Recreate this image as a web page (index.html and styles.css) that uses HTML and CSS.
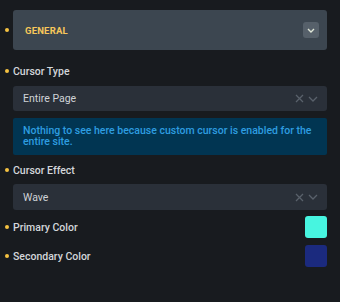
FILE: index.html
```html
<!DOCTYPE html>
<html>
<head>
    <link rel="stylesheet" href="styles.css">
</head>
<body>
    <div class="panel">
        <div class="field">
            <span class="dot"></span>
            <div class="section-head">
                <span class="section-title">General</span>
                <span class="toggle">
                    <svg width="8" height="5" viewBox="0 0 8 5"><path d="M1 1l3 3 3-3" fill="none" stroke="#dfe6d8" stroke-width="1.4"/></svg>
                </span>
            </div>
        </div>

        <div class="field label-row">
            <span class="dot"></span>
            <label>Cursor Type</label>
        </div>
        <div class="select">
            <span>Entire Page</span>
            <span class="select-icons">
                <svg width="9" height="9" viewBox="0 0 9 9"><path d="M1 1l7 7M8 1l-7 7" stroke="#59616b" stroke-width="1.3"/></svg>
                <svg width="10" height="6" viewBox="0 0 10 6"><path d="M1 1l4 4 4-4" fill="none" stroke="#59616b" stroke-width="1.3"/></svg>
            </span>
        </div>
        <div class="notice">Nothing to see here because custom cursor is enabled for the entire site.</div>

        <div class="field label-row after-notice">
            <span class="dot"></span>
            <label>Cursor Effect</label>
        </div>
        <div class="select">
            <span>Wave</span>
            <span class="select-icons">
                <svg width="9" height="9" viewBox="0 0 9 9"><path d="M1 1l7 7M8 1l-7 7" stroke="#59616b" stroke-width="1.3"/></svg>
                <svg width="10" height="6" viewBox="0 0 10 6"><path d="M1 1l4 4 4-4" fill="none" stroke="#59616b" stroke-width="1.3"/></svg>
            </span>
        </div>

        <div class="field color-row">
            <span class="dot"></span>
            <label>Primary Color</label>
            <span class="swatch primary"></span>
        </div>
        <div class="field color-row">
            <span class="dot"></span>
            <label>Secondary Color</label>
            <span class="swatch secondary"></span>
        </div>
    </div>
</body>
</html>
```

FILE: styles.css
```css
body {
    margin: 0;
    background-color: #181b1f;
    font-family: Roboto, "Noto Sans", sans-serif;
    color: #d3d6da;
}

.panel {
    display: flex;
    flex-direction: column;
    padding: 10px 13px 0 13px;
}

.field {
    position: relative;
    display: flex;
    align-items: center;
}

.dot {
    position: absolute;
    left: -8px;
    top: 50%;
    width: 4px;
    height: 4px;
    margin-top: -2px;
    border-radius: 50%;
    background-color: #f5c242;
}

.section-head {
    flex: 1;
    height: 40px;
    display: flex;
    align-items: center;
    justify-content: space-between;
    padding: 0 8px 0 12px;
    background-color: #3c4650;
    border-radius: 3px;
}

.section-title {
    font-size: 9.5px;
    font-weight: 700;
    text-transform: uppercase;
    letter-spacing: 0.2px;
    color: #f7c65a;
}

.toggle {
    width: 16px;
    height: 16px;
    display: flex;
    align-items: center;
    justify-content: center;
    background-color: #56606a;
    border-radius: 3px;
}

.label-row {
    height: 22px;
    margin-top: 10px;
}

.after-notice {
    margin-top: 4px;
}

label {
    font-size: 10.5px;
    font-weight: 500;
}

.select {
    height: 25px;
    margin-top: 4px;
    display: flex;
    align-items: center;
    justify-content: space-between;
    padding: 0 9px 0 10px;
    background-color: #2a3039;
    border-radius: 3px;
    font-size: 10.5px;
    color: #cfd3d7;
}

.after-notice + .select {
    height: 26px;
    margin-top: 3px;
}

.select-icons {
    display: flex;
    align-items: center;
    gap: 4px;
}

.notice {
    margin-top: 7px;
    padding: 7px 10px 8px 10px;
    background-color: #013552;
    border-radius: 2px;
    font-size: 10.5px;
    font-weight: 500;
    line-height: 11px;
    color: #2e9de0;
}

.color-row {
    justify-content: space-between;
    height: 22px;
    margin-top: 6px;
}

.color-row + .color-row {
    margin-top: 7px;
}

.swatch {
    width: 22px;
    height: 22px;
    border-radius: 3px;
}

.primary {
    background-color: #47f5e0;
}

.secondary {
    background-color: #1b2a7e;
}
```
